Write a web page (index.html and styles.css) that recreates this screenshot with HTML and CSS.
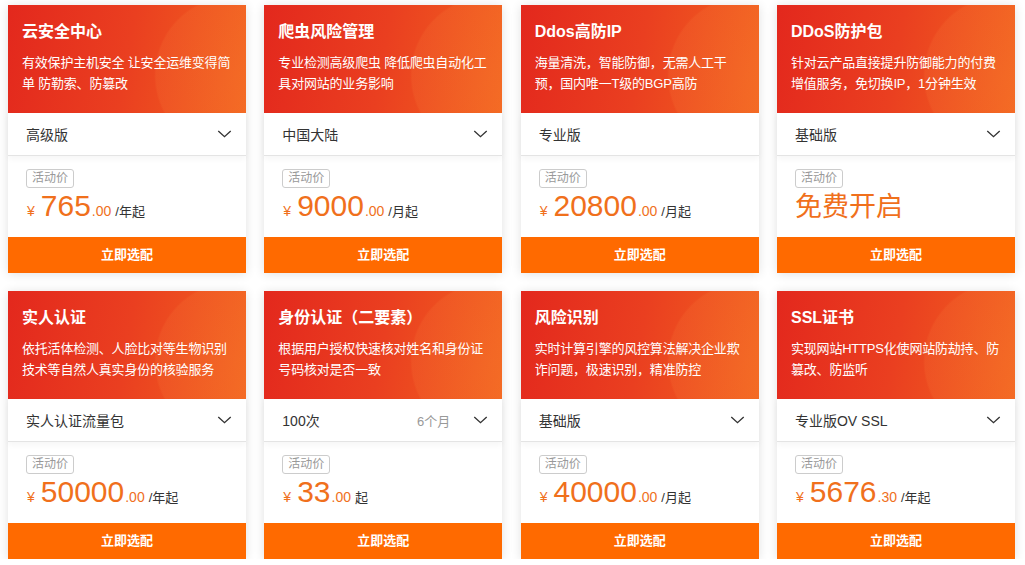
FILE: index.html
```html
<!DOCTYPE html>
<html lang="zh-CN">
<head>
    <meta charset="UTF-8">
    <meta name="viewport" content="width=device-width, initial-scale=1.0">
    <title>安全产品</title>
    <link rel="stylesheet" href="styles.css">
</head>
<body>

<div class="product-grid">
    <div class="card">
        <div class="card-head">
            <h3 class="card-title">云安全中心</h3>
            <p class="card-desc">有效保护主机安全 让安全运维变得简单 防勒索、防篡改</p>
        </div>
        <div class="card-select">
            <span class="select-value">高级版</span>
            <svg class="chevron" viewBox="0 0 16 9"><path d="M1 1l7 6.5L15 1"/></svg>
        </div>
        <div class="card-price">
            <span class="tag">活动价</span>
            <div class="price"><span class="yen">¥</span><span class="num">765</span><span class="dec">.00</span><span class="unit">/年起</span></div>
        </div>
        <a class="card-btn" href="#">立即选配</a>
    </div>

    <div class="card">
        <div class="card-head">
            <h3 class="card-title">爬虫风险管理</h3>
            <p class="card-desc">专业检测高级爬虫 降低爬虫自动化工具对网站的业务影响</p>
        </div>
        <div class="card-select">
            <span class="select-value">中国大陆</span>
            <svg class="chevron" viewBox="0 0 16 9"><path d="M1 1l7 6.5L15 1"/></svg>
        </div>
        <div class="card-price">
            <span class="tag">活动价</span>
            <div class="price"><span class="yen">¥</span><span class="num">9000</span><span class="dec">.00</span><span class="unit">/月起</span></div>
        </div>
        <a class="card-btn" href="#">立即选配</a>
    </div>

    <div class="card">
        <div class="card-head">
            <h3 class="card-title">Ddos高防IP</h3>
            <p class="card-desc">海量清洗，智能防御，无需人工干预，国内唯一T级的BGP高防</p>
        </div>
        <div class="card-select">
            <span class="select-value">专业版</span>
        </div>
        <div class="card-price">
            <span class="tag">活动价</span>
            <div class="price"><span class="yen">¥</span><span class="num">20800</span><span class="dec">.00</span><span class="unit">/月起</span></div>
        </div>
        <a class="card-btn" href="#">立即选配</a>
    </div>

    <div class="card">
        <div class="card-head">
            <h3 class="card-title">DDoS防护包</h3>
            <p class="card-desc">针对云产品直接提升防御能力的付费增值服务，免切换IP，1分钟生效</p>
        </div>
        <div class="card-select">
            <span class="select-value">基础版</span>
            <svg class="chevron" viewBox="0 0 16 9"><path d="M1 1l7 6.5L15 1"/></svg>
        </div>
        <div class="card-price">
            <span class="tag">活动价</span>
            <div class="price free">免费开启</div>
        </div>
        <a class="card-btn" href="#">立即选配</a>
    </div>

    <div class="card">
        <div class="card-head">
            <h3 class="card-title">实人认证</h3>
            <p class="card-desc">依托活体检测、人脸比对等生物识别技术等自然人真实身份的核验服务</p>
        </div>
        <div class="card-select">
            <span class="select-value">实人认证流量包</span>
            <svg class="chevron" viewBox="0 0 16 9"><path d="M1 1l7 6.5L15 1"/></svg>
        </div>
        <div class="card-price">
            <span class="tag">活动价</span>
            <div class="price"><span class="yen">¥</span><span class="num">50000</span><span class="dec">.00</span><span class="unit">/年起</span></div>
        </div>
        <a class="card-btn" href="#">立即选配</a>
    </div>

    <div class="card">
        <div class="card-head">
            <h3 class="card-title">身份认证（二要素）</h3>
            <p class="card-desc">根据用户授权快速核对姓名和身份证号码核对是否一致</p>
        </div>
        <div class="card-select">
            <span class="select-value">100次</span>
            <span class="select-extra">6个月</span>
            <svg class="chevron" viewBox="0 0 16 9"><path d="M1 1l7 6.5L15 1"/></svg>
        </div>
        <div class="card-price">
            <span class="tag">活动价</span>
            <div class="price"><span class="yen">¥</span><span class="num">33</span><span class="dec">.00</span><span class="unit">起</span></div>
        </div>
        <a class="card-btn" href="#">立即选配</a>
    </div>

    <div class="card">
        <div class="card-head">
            <h3 class="card-title">风险识别</h3>
            <p class="card-desc">实时计算引擎的风控算法解决企业欺诈问题，极速识别，精准防控</p>
        </div>
        <div class="card-select">
            <span class="select-value">基础版</span>
            <svg class="chevron" viewBox="0 0 16 9"><path d="M1 1l7 6.5L15 1"/></svg>
        </div>
        <div class="card-price">
            <span class="tag">活动价</span>
            <div class="price"><span class="yen">¥</span><span class="num">40000</span><span class="dec">.00</span><span class="unit">/月起</span></div>
        </div>
        <a class="card-btn" href="#">立即选配</a>
    </div>

    <div class="card">
        <div class="card-head">
            <h3 class="card-title">SSL证书</h3>
            <p class="card-desc">实现网站HTTPS化使网站防劫持、防篡改、防监听</p>
        </div>
        <div class="card-select">
            <span class="select-value">专业版OV SSL</span>
            <svg class="chevron" viewBox="0 0 16 9"><path d="M1 1l7 6.5L15 1"/></svg>
        </div>
        <div class="card-price">
            <span class="tag">活动价</span>
            <div class="price"><span class="yen">¥</span><span class="num">5676</span><span class="dec">.30</span><span class="unit">/年起</span></div>
        </div>
        <a class="card-btn" href="#">立即选配</a>
    </div>
</div>

</body>
</html>
```

FILE: styles.css
```css
body {
    margin: 0;
    padding: 5px 10px 0 8px;
    background: #fff;
    font-family: "Liberation Sans", "Noto Sans CJK SC", sans-serif;
    color: #333;
}
.product-grid {
    display: grid;
    grid-template-columns: repeat(4, 238px);
    justify-content: space-between;
    row-gap: 18px;
    width: 1007px;
}
.card {
    background: #fff;
    box-shadow: 0 1px 10px rgba(0, 0, 0, 0.12);
    display: flex;
    flex-direction: column;
}
.card-head {
    height: 108px;
    box-sizing: border-box;
    padding: 16px 14px 0 14px;
    color: #fff;
    background:
        radial-gradient(circle at 95% 65%, rgba(255, 150, 70, 0.16) 0, rgba(255, 150, 70, 0.12) 78px, rgba(255, 150, 70, 0) 80px),
        linear-gradient(100deg, #e3281d 0%, #ea3f20 50%, #f2641f 100%);
}
.card-title {
    margin: 0;
    font-size: 16px;
    font-weight: bold;
    line-height: 22px;
}
.card-desc {
    margin: 9px 0 0;
    font-size: 13px;
    line-height: 21px;
    letter-spacing: -0.2px;
}
.card-select {
    height: 43px;
    box-sizing: border-box;
    display: flex;
    align-items: center;
    padding: 0 14px 0 18px;
    border-bottom: 1px solid #e4e4e4;
    box-shadow: 0 3px 6px rgba(0, 0, 0, 0.04);
    font-size: 14px;
    color: #333;
}
.select-value {
    flex: 1;
}
.select-extra {
    color: #999;
    font-size: 13px;
    margin-right: 23px;
}
.chevron {
    width: 15px;
    height: 8px;
    fill: none;
    stroke: #333;
    stroke-width: 1.5;
}
.card-price {
    height: 81px;
    box-sizing: border-box;
    padding: 12px 18px 0;
}
.tag {
    display: inline-block;
    border: 1px solid #ccc;
    border-radius: 3px;
    padding: 0 5px;
    font-size: 12px;
    line-height: 17px;
    color: #999;
}
.price {
    display: flex;
    align-items: baseline;
    margin-top: 1px;
    color: #f0701c;
    height: 34px;
}
.yen {
    font-size: 14px;
    margin-left: 1px;
    margin-right: 6px;
}
.num {
    font-size: 30px;
    line-height: 34px;
}
.dec {
    font-size: 14px;
    margin-left: 1px;
}
.unit {
    font-size: 13px;
    color: #333;
    margin-left: 4px;
}
.price.free {
    font-size: 27px;
    line-height: 36px;
}
.card-btn {
    height: 36px;
    line-height: 36px;
    background: #ff6a00;
    color: #fff;
    text-align: center;
    font-size: 13px;
    font-weight: bold;
    text-decoration: none;
}
```
